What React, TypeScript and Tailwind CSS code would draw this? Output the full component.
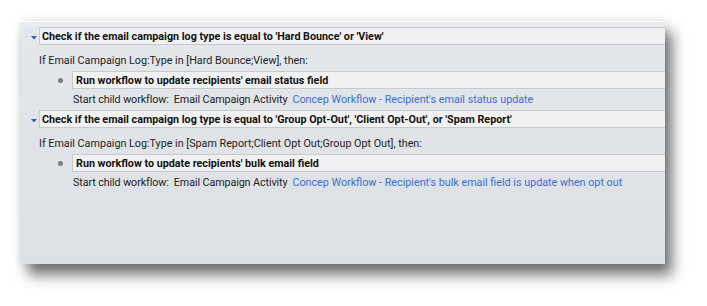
const font = { fontFamily: 'Roboto, "Liberation Sans", sans-serif' }

type Section = {
  check: string
  condition: string
  action: string
  link: string
}

const sections: Section[] = [
  {
    check: "Check if the email campaign log type is equal to 'Hard Bounce' or 'View'",
    condition: 'If Email Campaign Log:Type in [Hard Bounce;View], then:',
    action: "Run workflow to update recipients' email status field",
    link: "Concep Workflow - Recipient's email status update",
  },
  {
    check: "Check if the email campaign log type is equal to 'Group Opt-Out', 'Client Opt-Out', or 'Spam Report'",
    condition: 'If Email Campaign Log:Type in [Spam Report;Client Opt Out;Group Opt Out], then:',
    action: "Run workflow to update recipients' bulk email field",
    link: "Concep Workflow - Recipient's bulk email field is update when opt out",
  },
]

function Step({ s }: { s: Section }) {
  return (
    <div className="flex flex-col">
      {/* step header */}
      <div className="flex h-[18px]">
        <div className="flex w-[18px] items-start justify-end pr-[2px] pt-[9px]">
          <svg width="6" height="4" viewBox="0 0 6 4">
            <path d="M0 0 H6 L3 3.5 Z" fill="#2c62c9" />
          </svg>
        </div>
        <div className="flex-1 border-y border-l border-[#c6c9ce] bg-[#f1f1f1] pl-[2px] pt-[1px] text-[10.75px] font-bold leading-[15px] text-[#111]">
          {s.check}
        </div>
      </div>
      {/* condition */}
      <div className="h-[26px] pl-[18px] pt-[9px] text-[10.75px] leading-[14px] text-[#1e1e1e]">
        {s.condition}
      </div>
      {/* action */}
      <div className="flex h-[18px]">
        <div className="flex w-[51px] items-center justify-end pr-[9px]">
          <div className="h-[5px] w-[5px] rounded-full bg-[#7c7c7c]" />
        </div>
        <div className="flex-1 border-y border-l border-[#c6c9ce] bg-[#f1f1f1] pl-[3px] pt-[1px] text-[10.75px] font-bold leading-[15px] text-[#111]">
          {s.action}
        </div>
      </div>
      {/* child workflow */}
      <div className="flex h-[21px] pl-[52px] pt-[4px] text-[10.75px] leading-[14px] text-[#1e1e1e]">
        <span className="whitespace-pre tracking-[-0.1px]">Start child workflow:  Email Campaign Activity</span>
        <span className="ml-[5px] text-[#3d6fd0]">{s.link}</span>
      </div>
    </div>
  )
}

export default function App() {
  return (
    <div className="h-[306px] w-[707px] bg-white pl-[21px] pt-[21px]" style={font}>
      <div className="flex h-[243px] w-[644px] flex-col bg-gradient-to-b from-[#e4e7ec] to-[#dcdfe3] shadow-[7px_11px_13px_rgba(0,0,0,0.55),0_0_9px_rgba(0,0,0,0.12)]">
        <div className="h-[6px] border-t border-white bg-[#eaecef]" />
        {sections.map((s) => (
          <Step key={s.check} s={s} />
        ))}
      </div>
    </div>
  )
}
